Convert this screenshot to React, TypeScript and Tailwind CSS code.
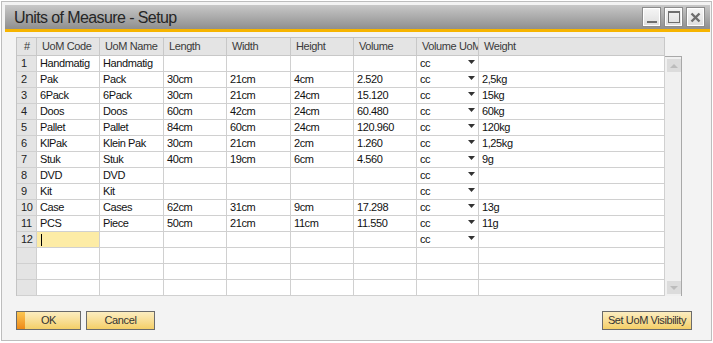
import React from "react";

const COLS = [20, 63, 64, 63, 64, 63, 63, 62, 186];
const HEAD = ["#", "UoM Code", "UoM Name", "Length", "Width", "Height", "Volume", "Volume UoM", "Weight"];

const DATA: string[][] = [
  ["1", "Handmatig", "Handmatig", "", "", "", "", "cc", ""],
  ["2", "Pak", "Pack", "30cm", "21cm", "4cm", "2.520", "cc", "2,5kg"],
  ["3", "6Pack", "6Pack", "30cm", "21cm", "24cm", "15.120", "cc", "15kg"],
  ["4", "Doos", "Doos", "60cm", "42cm", "24cm", "60.480", "cc", "60kg"],
  ["5", "Pallet", "Pallet", "84cm", "60cm", "24cm", "120.960", "cc", "120kg"],
  ["6", "KlPak", "Klein Pak", "30cm", "21cm", "2cm", "1.260", "cc", "1,25kg"],
  ["7", "Stuk", "Stuk", "40cm", "19cm", "6cm", "4.560", "cc", "9g"],
  ["8", "DVD", "DVD", "", "", "", "", "cc", ""],
  ["9", "Kit", "Kit", "", "", "", "", "cc", ""],
  ["10", "Case", "Cases", "62cm", "31cm", "9cm", "17.298", "cc", "13g"],
  ["11", "PCS", "Piece", "50cm", "21cm", "11cm", "11.550", "cc", "11g"],
  ["12", "", "", "", "", "", "", "cc", ""],
  ["", "", "", "", "", "", "", "", ""],
  ["", "", "", "", "", "", "", "", ""],
  ["", "", "", "", "", "", "", "", ""],
];

function WinBtn({ kind }: { kind: "min" | "max" | "close" }) {
  return (
    <div className="w-[19px] h-[20px] border border-[#8c8c8c] bg-gradient-to-b from-[#f6f6f6] to-[#dedede] flex items-center justify-center shadow-[inset_0_0_0_1px_#ffffff]">
      {kind === "min" && <div className="w-[10px] h-[2px] bg-[#6e6e6e] mt-[9px]" />}
      {kind === "max" && <div className="w-[12px] h-[12px] border border-[#6e6e6e] border-t-2" />}
      {kind === "close" && (
        <svg width="11" height="11" viewBox="0 0 11 11">
          <path d="M1.5 1.5 L9.5 9.5 M9.5 1.5 L1.5 9.5" stroke="#6e6e6e" strokeWidth="2.4" />
        </svg>
      )}
    </div>
  );
}

function Btn({ label, w, ok }: { label: string; w: string; ok?: boolean }) {
  return (
    <div className={`${w} h-[19px] border border-[#6b6b6b] bg-gradient-to-b from-[#fcedc0] to-[#f4cf66] flex items-stretch`}>
      {ok && <div className="w-[8px] bg-gradient-to-b from-[#fbc650] to-[#ee8a14]" />}
      <div className={`flex-1 flex items-center justify-center text-[#333] ${ok ? "pr-[8px]" : ""}`}>{label}</div>
    </div>
  );
}

export default function App() {
  return (
    <div className="w-[713px] h-[343px] bg-white pt-[1px] pl-[1px] font-['Liberation_Sans',Arial,sans-serif]">
      <div className="w-[711px] h-[340px] border border-[#bdbdbd] bg-[#f3f3f3] pt-[3px] pl-[3px] pr-[1px] flex flex-col">
        {/* title bar */}
        <div className="h-[24px] bg-gradient-to-b from-[#c8c8c8] to-[#8f8f8f] flex items-center pl-[9px] pr-[5px]">
          <div className="text-[16px] tracking-[-0.6px] text-[#262626] flex-1 leading-none pt-[1px]">Units of Measure - Setup</div>
          <div className="flex gap-[3px] items-start mt-[2px] self-start">
            <WinBtn kind="min" />
            <WinBtn kind="max" />
            <WinBtn kind="close" />
          </div>
        </div>
        <div className="h-[3px] bg-[#f6b400]" />
        {/* body */}
        <div className="pl-[11px] pt-[5px] flex flex-col text-[11px] tracking-[-0.4px]">
          <div className="flex items-start">
            <div className="border-l border-t border-[#c4c4c4]">
              {/* header */}
              <div className="flex h-[18px]">
                {HEAD.map((h, i) => (
                  <div
                    key={i}
                    style={{ width: COLS[i] }}
                    className={`h-full border-r border-b border-[#c8c8c8] bg-[#e4e4e4] text-[#3a3a3a] flex items-center overflow-hidden whitespace-nowrap ${i === 0 ? "pl-[7px]" : "pl-[5px]"}`}
                  >
                    {h}
                  </div>
                ))}
              </div>
              {DATA.map((row, r) => (
                <div key={r} className="flex h-[16px]">
                  {row.map((c, i) => {
                    const sel = r === 11 && i === 1;
                    return (
                      <div
                        key={i}
                        style={{ width: COLS[i] }}
                        className={`relative h-full border-r border-b border-[#d0d0d0] flex items-center overflow-hidden whitespace-nowrap ${
                          i === 0 ? "bg-[#e4e4e4] pl-[4px] text-[#222]" : sel ? "bg-[#fdeca6] pl-[4px]" : "bg-white pl-[3px] text-[#111]"
                        }`}
                      >
                        {sel && <div className="w-[1px] h-[12px] bg-black" />}
                        {c}
                        {i === 7 && c && (
                          <svg className="absolute right-[3px] top-[4px]" width="7" height="4" viewBox="0 0 7 4">
                            <path d="M0 0 H7 L3.5 4 Z" fill="#333" />
                          </svg>
                        )}
                      </div>
                    );
                  })}
                </div>
              ))}
            </div>
            {/* scrollbar */}
            <div className="mt-[19px] w-[17px] h-[240px] border-t border-r border-[#a8a8a8] bg-[#f0f0f0] flex flex-col items-center justify-between pt-[2px] pb-[2px] pl-[1px]">
              <div className="w-[14px] h-[13px] bg-[#dcdcdc] flex items-center justify-center">
                <svg width="8" height="4" viewBox="0 0 8 4">
                  <path d="M0 4 H8 L4 0 Z" fill="#bcbcbc" />
                </svg>
              </div>
              <div className="w-[14px] h-[13px] bg-[#dcdcdc] flex items-center justify-center">
                <svg width="8" height="4" viewBox="0 0 8 4">
                  <path d="M0 0 H8 L4 4 Z" fill="#bcbcbc" />
                </svg>
              </div>
            </div>
          </div>
          {/* buttons */}
          <div className="mt-[15px] flex items-start pr-[18px]">
            <Btn label="OK" w="w-[65px]" ok />
            <div className="w-[5px]" />
            <Btn label="Cancel" w="w-[69px]" />
            <div className="flex-1" />
            <Btn label="Set UoM Visibility" w="w-[90px]" />
          </div>
        </div>
      </div>
    </div>
  );
}
